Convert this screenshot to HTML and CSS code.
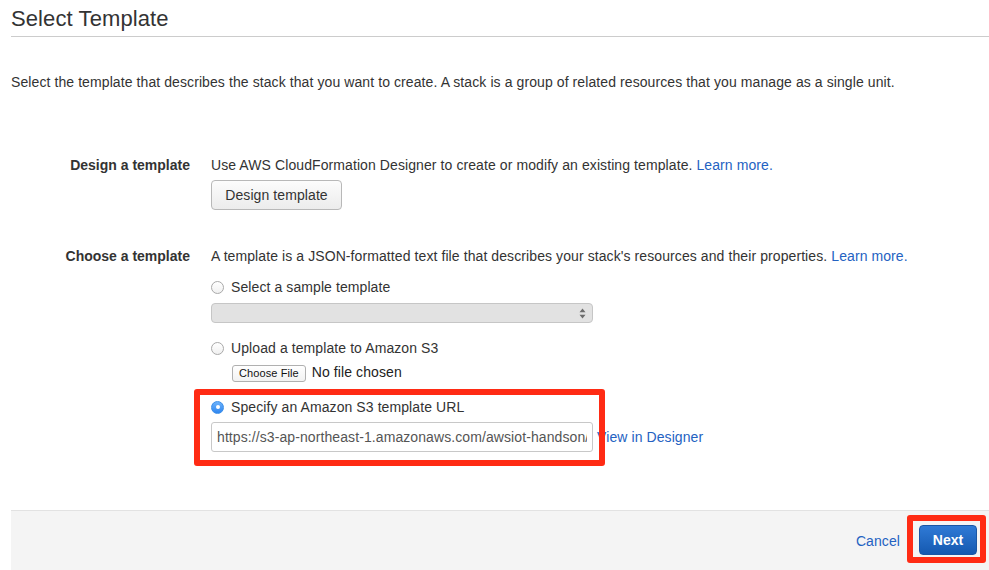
FILE: index.html
```html
<!DOCTYPE html>
<html lang="en">
<head>
<meta charset="utf-8">
<title>Select Template</title>
<link rel="stylesheet" href="styles.css">
</head>
<body>
<div class="page">
  <h1 class="title">Select Template</h1>
  <p class="intro">Select the template that describes the stack that you want to create. A stack is a group of related resources that you manage as a single unit.</p>

  <div class="form">
    <div class="label">Design a template</div>
    <div class="field">
      <div class="line">Use AWS CloudFormation Designer to create or modify an existing template. <a class="link" href="#">Learn more.</a></div>
      <button class="btn">Design template</button>
    </div>

    <div class="label label-2">Choose a template</div>
    <div class="field field-2">
      <div class="line">A template is a JSON-formatted text file that describes your stack's resources and their properties. <a class="link" href="#">Learn more.</a></div>

      <div class="line radio-line opt-1"><span class="radio"></span>Select a sample template</div>
      <div class="select">
        <svg class="sel-arrows" width="7" height="11" viewBox="0 0 7 11"><path d="M3.5 0.5 L6.5 4.2 H0.5 Z M3.5 10.5 L6.5 6.8 H0.5 Z" fill="#6d6d6d"/></svg>
      </div>

      <div class="line radio-line opt-2"><span class="radio"></span>Upload a template to Amazon S3</div>
      <div class="file-row"><span class="file-btn">Choose File</span><span class="file-text">No file chosen</span></div>

      <div class="specify">
        <div class="line radio-line"><span class="radio checked"></span>Specify an Amazon S3 template URL</div>
        <div class="url-row">
          <input class="url" type="text" value="https://s3-ap-northeast-1.amazonaws.com/awsiot-handson/cfn-template.json">
          <a class="link designer" href="#">View in Designer</a>
        </div>
        <span class="mark mark-url"></span>
      </div>
    </div>
  </div>

  <div class="footer">
    <a class="link cancel" href="#">Cancel</a>
    <span class="next-wrap"><button class="next">Next</button><span class="mark mark-next"></span></span>
  </div>
</div>
</body>
</html>
```
FILE: styles.css
```css
* { box-sizing: border-box; }
html, body { margin: 0; padding: 0; background: #fff; }
body {
  font-family: "Liberation Sans", Arial, sans-serif;
  font-size: 14px;
  line-height: 20px;
  letter-spacing: 0.09px;
  color: #333;
  overflow: hidden;
  height: 570px;
}
.page { padding-left: 11px; }

.title {
  margin: 0;
  padding: 4px 0 2px 0;
  font-size: 22px;
  font-weight: normal;
  line-height: 30px;
  letter-spacing: 0.1px;
  color: #333;
  border-bottom: 1px solid #cccccc;
}
.intro { margin: 35px 0 0 0; }

.form {
  display: grid;
  grid-template-columns: 179px 1fr;
  column-gap: 21px;
  margin-top: 63px;
}
.label { text-align: right; font-weight: bold; color: #333; letter-spacing: 0; }
.label-2, .field-2 { margin-top: 36px; }

.link { color: #2462c2; text-decoration: none; }

.btn {
  display: block;
  margin-top: 5px;
  height: 30px;
  width: 131px;
  padding: 0;
  font-family: inherit;
  font-size: 14px;
  letter-spacing: 0.09px;
  color: #333;
  background: linear-gradient(#fcfcfc, #ececec);
  border: 1px solid #b8b8b8;
  border-radius: 4px;
}

.radio-line { display: flex; align-items: center; }
.opt-1 { margin-top: 11px; }
.opt-2 { margin-top: 15px; }
.radio {
  width: 13px;
  height: 13px;
  margin-right: 7px;
  border-radius: 50%;
  border: 1px solid #a9a9a9;
  background: linear-gradient(#ffffff, #f0f0f0);
  flex: none;
  position: relative;
}
.radio.checked {
  border-color: #3b8ee8;
  background: linear-gradient(#6cb2fb, #2f86f0);
}
.radio.checked::after {
  content: "";
  position: absolute;
  left: 3.5px;
  top: 3.5px;
  width: 4px;
  height: 4px;
  border-radius: 50%;
  background: #fff;
}

.select {
  margin-top: 6px;
  width: 382px;
  height: 20px;
  border: 1px solid #c6c6c6;
  border-radius: 4px;
  background: #e2e2e2;
  display: flex;
  justify-content: flex-end;
  align-items: center;
  padding-right: 6px;
}

.file-row { display: flex; align-items: baseline; margin-top: 4px; padding-left: 21px; height: 20px; }
.file-btn {
  display: inline-block;
  height: 17px;
  line-height: 15px;
  padding: 0 6px;
  font-size: 11px;
  letter-spacing: 0.1px;
  color: #111;
  border: 1px solid #b0b0b0;
  border-radius: 3px;
  background: linear-gradient(#ffffff, #f2f2f2);
  margin-right: 6px;
}
.file-text { color: #222; }

.specify { position: relative; margin-top: 15px; }
.url-row { display: flex; align-items: center; margin-top: 5px; }
.url {
  width: 382px;
  height: 30px;
  padding: 0 5px;
  border: 1px solid #c8c8c8;
  border-radius: 3px;
  font-family: inherit;
  font-size: 14px;
  letter-spacing: 0.09px;
  color: #555;
  background: #fff;
  outline: none;
}
.designer { margin-left: 4px; }

.mark {
  position: absolute;
  border: 6px solid #ff2b14;
  border-radius: 3px;
  pointer-events: none;
}
.mark-url { left: -17px; top: -8px; width: 411px; height: 77px; }

.footer {
  margin-top: 58px;
  height: 70px;
  background: #f4f4f4;
  border-top: 1px solid #e2e2e2;
  display: flex;
  justify-content: flex-end;
  align-items: flex-start;
  padding: 14px 12px 0 0;
}
.cancel { line-height: 30px; margin-right: 19px; padding-top: 1px; }
.next-wrap { position: relative; display: inline-block; }
.next {
  display: block;
  height: 30px;
  width: 58px;
  padding: 0;
  font-family: inherit;
  font-size: 14px;
  font-weight: bold;
  color: #fff;
  background: linear-gradient(#2f7ad6, #1559b0);
  border: 1px solid #1a56a4;
  border-radius: 4px;
}
.mark-next { left: -12px; top: -10px; width: 79px; height: 48px; }
```
